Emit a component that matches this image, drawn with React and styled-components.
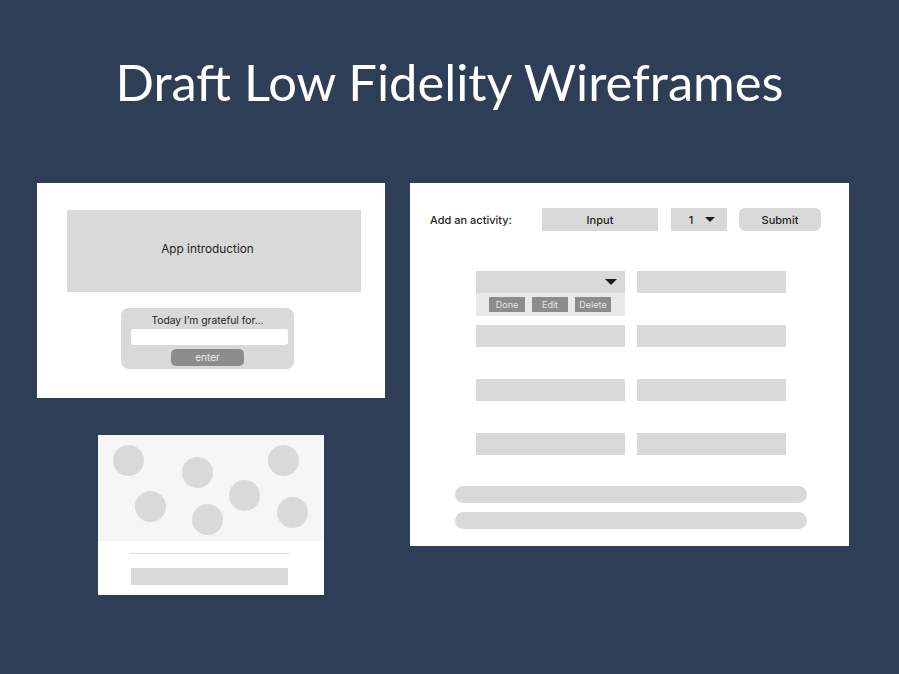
import React from "react";
import styled, { createGlobalStyle } from "styled-components";

const Global = createGlobalStyle`
  html, body { margin: 0; padding: 0; background: #2e3e56; }
  * { box-sizing: border-box; }
`;

const Page = styled.div`
  width: 899px;
  height: 674px;
  background: #2e3e56;
  overflow: hidden;
  font-family: Inter, "Noto Sans", sans-serif;
`;

const Title = styled.h1`
  margin: 0;
  padding-top: 51px;
  height: 183px;
  text-align: center;
  font-family: Lato, "Open Sans", sans-serif;
  font-weight: 400;
  font-size: 50.7px;
  line-height: 62px;
  color: #ffffff;
`;

const Main = styled.div`
  display: flex;
  align-items: flex-start;
  padding-left: 37px;
  gap: 25px;
`;

const LeftCol = styled.div`
  display: flex;
  flex-direction: column;
  gap: 37px;
`;

const Card = styled.div`
  background: #ffffff;
  width: ${(p) => p.$w}px;
  height: ${(p) => p.$h}px;
  margin-left: ${(p) => p.$ml || 0}px;
`;

/* Card 1 */
const IntroCard = styled(Card)`
  display: flex;
  flex-direction: column;
  align-items: center;
  padding-top: 27px;
`;

const IntroBox = styled.div`
  width: 294px;
  height: 82px;
  background: #d9d9d9;
  display: flex;
  align-items: center;
  justify-content: center;
  padding: 0 13px 4px 0;
  font-size: 11.8px;
  color: #1e1e1e;
  margin-left: 6px;
`;

const GratefulBox = styled.div`
  margin-top: 16px;
  margin-left: -7px;
  width: 173px;
  height: 61px;
  background: #d9d9d9;
  border-radius: 8px;
  display: flex;
  flex-direction: column;
  align-items: center;
  padding-top: 5px;
`;

const GratefulLabel = styled.div`
  font-size: 10.3px;
  line-height: 14px;
  color: #1e1e1e;
`;

const WhiteInput = styled.div`
  margin-top: 2px;
  width: 157px;
  height: 16px;
  background: #ffffff;
  border-radius: 3px;
  margin-left: 4px;
`;

const EnterBtn = styled.div`
  margin-top: 4px;
  width: 73px;
  height: 17px;
  border-radius: 5px;
  background: #8c8c8c;
  color: #eeeeee;
  font-size: 10px;
  line-height: 17px;
  text-align: center;
`;

/* Card 2 */
const CirclesArea = styled.div`
  position: relative;
  height: 106px;
  background: #f6f6f6;
`;

const Circle = styled.div`
  position: absolute;
  width: 31px;
  height: 31px;
  border-radius: 50%;
  background: #d9d9d9;
  left: ${(p) => p.$x - 15.5}px;
  top: ${(p) => p.$y - 15.5}px;
`;

const Divider = styled.div`
  margin: 12px 0 0 31px;
  width: 160px;
  height: 1px;
  background: #dddddd;
`;

const BottomBar = styled.div`
  margin: 14px 0 0 33px;
  width: 157px;
  height: 17px;
  background: #d9d9d9;
`;

/* Card 3 */
const ActivityCard = styled(Card)`
  padding: 25px 0 0 20px;
`;

const Toolbar = styled.div`
  display: flex;
  align-items: center;
  height: 23px;
`;

const ToolLabel = styled.div`
  width: 112px;
  font-size: 11px;
  font-weight: 500;
  color: #1e1e1e;
`;

const ToolBox = styled.div`
  width: ${(p) => p.$w}px;
  height: 23px;
  margin-right: ${(p) => p.$mr || 0}px;
  background: #d9d9d9;
  border-radius: ${(p) => p.$r || 0}px;
  display: flex;
  align-items: center;
  justify-content: center;
  gap: ${(p) => p.$gap || 0}px;
  padding-left: ${(p) => p.$pl || 0}px;
  font-size: 11px;
  font-weight: 500;
  color: #1e1e1e;
`;

const Grid = styled.div`
  margin: 40px 0 0 46px;
  display: grid;
  grid-template-columns: 149px 149px;
  column-gap: 12px;
  row-gap: 32px;
  align-items: start;
`;

const Bar = styled.div`
  height: 22px;
  background: #d9d9d9;
  display: flex;
  align-items: center;
  justify-content: flex-end;
  padding-right: 8px;
`;

const Expanded = styled.div`
  display: flex;
  flex-direction: column;
  margin-bottom: -23px;
`;

const ActionRow = styled.div`
  height: 23px;
  background: #e8e8e8;
  display: flex;
  align-items: center;
  gap: 7px;
  padding-left: 13px;
`;

const ActionBtn = styled.div`
  width: 36px;
  height: 15px;
  background: #8c8c8c;
  color: #e4e4e4;
  font-size: 9px;
  line-height: 15px;
  text-align: center;
`;

const Pills = styled.div`
  margin: 31px 0 0 25px;
  display: flex;
  flex-direction: column;
  gap: 9px;
`;

const Pill = styled.div`
  width: 352px;
  height: 17px;
  border-radius: 9px;
  background: #d9d9d9;
`;

const Tri = ({ w = 12, h = 6 }) => (
  <svg width={w} height={h} viewBox="0 0 12 6">
    <polygon points="0,0 12,0 6,6" fill="#1e1e1e" />
  </svg>
);

const circles = [
  [128, 25],
  [197, 37],
  [283, 25],
  [150, 71],
  [244, 60],
  [207, 84],
  [292, 77],
];

export default function App() {
  return (
    <Page>
      <Global />
      <Title>Draft Low Fidelity Wireframes</Title>
      <Main>
        <LeftCol>
          <IntroCard $w={348} $h={215}>
            <IntroBox>App introduction</IntroBox>
            <GratefulBox>
              <GratefulLabel>Today I’m grateful for...</GratefulLabel>
              <WhiteInput />
              <EnterBtn>enter</EnterBtn>
            </GratefulBox>
          </IntroCard>
          <Card $w={226} $h={160} $ml={61}>
            <CirclesArea>
              {circles.map(([x, y], i) => (
                <Circle key={i} $x={x - 98} $y={y} />
              ))}
            </CirclesArea>
            <Divider />
            <BottomBar />
          </Card>
        </LeftCol>
        <ActivityCard $w={439} $h={363}>
          <Toolbar>
            <ToolLabel>Add an activity:</ToolLabel>
            <ToolBox $w={116} $mr={13}>Input</ToolBox>
            <ToolBox $w={56} $mr={12} $gap={12} $pl={6}>
              <span>1</span>
              <Tri w={10} h={5} />
            </ToolBox>
            <ToolBox $w={82} $r={6}>Submit</ToolBox>
          </Toolbar>
          <Grid>
            <Expanded>
              <Bar>
                <Tri />
              </Bar>
              <ActionRow>
                <ActionBtn>Done</ActionBtn>
                <ActionBtn>Edit</ActionBtn>
                <ActionBtn>Delete</ActionBtn>
              </ActionRow>
            </Expanded>
            <Bar />
            <Bar />
            <Bar />
            <Bar />
            <Bar />
            <Bar />
            <Bar />
          </Grid>
          <Pills>
            <Pill />
            <Pill />
          </Pills>
        </ActivityCard>
      </Main>
    </Page>
  );
}
